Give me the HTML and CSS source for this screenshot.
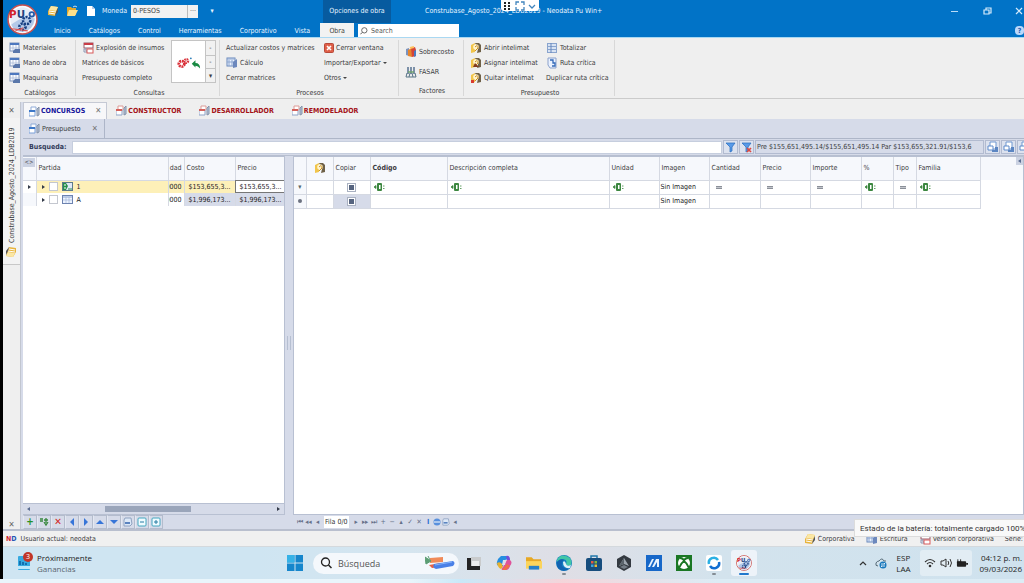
FILE: index.html
```html
<!DOCTYPE html>
<html lang="es">
<head>
<meta charset="utf-8">
<title>Construbase_Agosto_2024_LDB2019 - Neodata Pu Win+</title>
<link rel="stylesheet" href="styles.css">
</head>
<body>
<svg class="sprite" aria-hidden="true">
  <symbol id="logo" viewBox="0 0 30 30">
    <circle cx="15" cy="15" r="14" fill="#eef1f7" stroke="#c9504e" stroke-width="1.5"/>
    <circle cx="15" cy="15" r="12.3" fill="#e8edf6" stroke="#fff"/>
    <path d="M4 20Q9 16 18 12L27 14Q25 26 15 27 7 27 4 20Z" fill="#b4c9e8"/>
    <g fill="none" stroke="#173f82">
      <circle cx="19" cy="16" r="3.500" stroke-width="2.4" stroke-dasharray="2 1"/>
      <circle cx="15" cy="22" r="3" stroke-width="2.6" stroke-dasharray="2 1"/>
      <circle cx="24" cy="10" r="2.2" stroke="#285cab" stroke-width="1.8"/>
    </g>
    <path d="M5 24 20 26M8 26 16 23" stroke="#d55" stroke-width="1"/>
    <text x="2" y="14" font-family="DejaVu Sans" font-weight="700" font-size="10" fill="#d3232b">P<tspan fill="#23427f">U</tspan></text>
  </symbol>
  <symbol id="books" viewBox="0 0 12 12">
    <path d="M1 6 4 1 11 2 9 8 8 11 1 10Z" fill="#e8b43c"/><path d="M4 1 11 2 9 6 2 5Z" fill="#fbe7a4"/><path d="M2 6 9 7M2 8 8 9" stroke="#fff" stroke-width="1"/><path d="M9 7 11 3 11 7 8 11Z" fill="#555"/>
  </symbol>
  <symbol id="folder" viewBox="0 0 12 12"><path d="M1 2H5L6 3H10V10H1Z" fill="#e2a82c"/><path d="M3 5H12L9 11H1Z" fill="#ffe08a"/><path d="M7 2Q9 0 11 2" stroke="#cde" fill="none"/></symbol>
  <symbol id="page" viewBox="0 0 10 12"><path d="M1 1H6L9 4V11H1Z" fill="#fff"/><path d="M6 1V4H9" fill="#b8cbe6"/></symbol>
  <symbol id="sheet" viewBox="0 0 12 12"><rect x="1" y="1" width="9" height="8" fill="#f8fbff" stroke="#7d93bb"/><path d="M1 1H10V3H1Z" fill="#4d78be"/><path d="M1 6H10M4 3V9M7 3V9" stroke="#a5b6d3" stroke-width=".7"/><path d="M6 7H11V11H4V9Z" fill="#5a77aa"/></symbol>
  <symbol id="explode" viewBox="0 0 12 12"><rect x="2" y="1" width="9" height="5" fill="#fff" stroke="#9a5b68"/><path d="M2 1H11V3H2Z" fill="#c93d48"/><path d="M4 6V9H10M4 7H2V10H7" fill="none" stroke="#8b98b5"/><rect x="5" y="7" width="6" height="4" fill="#fff" stroke="#d85a5a"/></symbol>
  <symbol id="calc" viewBox="0 0 12 12"><rect x="1" y="1" width="8" height="8" fill="#e9f1ff" stroke="#6888bb"/><path d="M1 2H9M3 3V9M6 3V9M1 5H9" stroke="#8ba5cf"/><path d="M7 5 11 2V10L7 11Z" fill="#6c88bd"/></symbol>
  <symbol id="closered" viewBox="0 0 10 10"><rect x=".5" y=".5" width="9" height="9" rx="1" fill="#df5f48" stroke="#b8493a"/><path d="M3 3 7 7M7 3 3 7" stroke="#fff" stroke-width="1.600"/></symbol>
  <symbol id="extra" viewBox="0 0 12 12"><path d="M1 3 4 2V10L1 9Z" fill="#7c93be"/><path d="M3 4 7 2 7 11 3 10Z" fill="#e6852c"/><path d="M6 2 10 1 11 4V10L7 11Z" fill="#d54438"/><path d="M5 2 9 1" stroke="#ffc05c" stroke-width="2"/><path d="M9 5 11 4V10L9 11Z" fill="#4b79be"/></symbol>
  <symbol id="fasar" viewBox="0 0 12 12"><path d="M3 1V8M6 1V8M9 1V8" stroke="#7c90a8" stroke-width="2"/><path d="M1 11H11M2 7 1 11M10 7 11 11M5 7 4 11M7 7 8 11" stroke="#587486"/><path d="M3 6H9" stroke="#70a36f" stroke-width="1.500"/></symbol>
  <symbol id="intel" viewBox="0 0 12 12"><path d="M1 3 5 1 5 10 1 11Z" fill="#f1c54b"/><path d="M5 1H9L11 3V10L7 11 8 7Z" fill="#6f6148"/><circle cx="6" cy="5" r="2.800" fill="#fff3cd"/><path d="M5 5Q8 2 8 6L5 9" stroke="#c89025" fill="none"/></symbol>
  <symbol id="intelred" viewBox="0 0 12 12"><use href="#intel"/><path d="M1 8H4V11H1Z" fill="#d83c30"/></symbol>
  <symbol id="inteldark" viewBox="0 0 12 12"><use href="#intel"/><path d="M3 10 5 6 9 10Z" fill="#823b20"/></symbol>
  <symbol id="total" viewBox="0 0 12 12"><rect x="1" y="1" width="10" height="10" fill="#89a4ce"/><path d="M2 3H10M2 6H10M2 9H10" stroke="#f2f8ff" stroke-width="1.500"/><path d="M5 1V11" stroke="#6787bd"/></symbol>
  <symbol id="route" viewBox="0 0 12 12"><path d="M2 1H10V11H4L2 8Z" fill="#e9f1ff" stroke="#8ba1cb"/><path d="M4 3H7V6H9V9H6" fill="none" stroke="#3369b8" stroke-width="1.300"/></symbol>
  <symbol id="cogs" viewBox="0 0 26 18"><circle cx="5" cy="11" r="3" fill="none" stroke="#da3039" stroke-width="3" stroke-dasharray="2 .8"/><circle cx="10" cy="8" r="2" fill="none" stroke="#d9353d" stroke-width="2.500" stroke-dasharray="1.500 .7"/><circle cx="15" cy="5" r="1" fill="#2d7eb7"/><path d="M16 11 20 7V10Q25 10 25 16 23 13 20 13V15Z" fill="#198a43"/></symbol>
  <symbol id="docblue" viewBox="0 0 11 11"><path d="M2 1H7V5H2Z" fill="#fff" stroke="#8fabd8"/><path d="M0 5H6V10H0Z" fill="#fff" stroke="#7ba0d8"/><path d="M0 5H6" stroke="#3d78c8" stroke-width="2"/><path d="M8 3 10 1V9L8 10Z" fill="#b4c3da" stroke="#8593a8"/></symbol>
  <symbol id="docred" viewBox="0 0 11 11"><path d="M2 1H7V5H2Z" fill="#fff" stroke="#dd9b96"/><path d="M0 5H6V10H0Z" fill="#fff" stroke="#8fa4c8"/><path d="M0 5H6" stroke="#d4605a" stroke-width="2"/><path d="M8 3 10 1V9L8 10Z" fill="#b4c3da" stroke="#8593a8"/></symbol>
  <symbol id="rowsheet" viewBox="0 0 11 9"><rect x=".5" y=".5" width="10" height="8" fill="#edf4ff" stroke="#6d83b0"/><path d="M1 2H10" stroke="#8ba2cc"/><path d="M1 5H10M4 2V8M7 2V8" stroke="#a4b6d8" stroke-width=".7"/></symbol>
  <symbol id="rowgreen" viewBox="0 0 11 9"><rect x=".5" y=".5" width="10" height="8" fill="#dfe9f8" stroke="#5c7a8c"/><path d="M1 1H4L6 4 4 8H1Z" fill="#27904b"/><path d="M6 7H10" stroke="#27904b"/><path d="M2 3H4M2 6H4" stroke="#fff"/></symbol>
  <symbol id="funnel" viewBox="0 0 11 11"><path d="M1 1H10L7 5V9L5 10V5Z" fill="#5a9be8" stroke="#276abc" stroke-width=".7"/></symbol>
  <symbol id="funnelx" viewBox="0 0 11 11"><use href="#funnel"/><path d="M6 6 10 10M10 6 6 10" stroke="#de4a41" stroke-width="1.700"/></symbol>
  <symbol id="abc" viewBox="0 0 11 8"><rect x="3" y="0" width="5" height="8" rx="1" fill="#3c8740"/><rect x="5" y="2" width="1.500" height="4" fill="#fff"/><path d="M0 4 2 2.500V5.500ZM9 3H10.500M9 5.500H10.500" fill="#3c8740" stroke="#3c8740" stroke-width=".8"/></symbol>
  <symbol id="copydoc" viewBox="0 0 12 12"><path d="M3 1H9V8H3Z" fill="#fff" stroke="#6f97d0"/><path d="M1 5H6V9H1Z" fill="#fff" stroke="#5f8bcb"/><path d="M8 6H11V11H5V9H8Z" fill="#5c86c2"/></symbol>
  <symbol id="disk" viewBox="0 0 10 10"><path d="M2 1H8L9 7 7 9H1V3Z" fill="#dce8f7" stroke="#8fa2c0"/><path d="M2 5H7V7H2Z" fill="#5b83bf"/></symbol>
  <symbol id="win" viewBox="0 0 16 16"><path d="M0 0H7.500V7.500H0ZM8.500 0H16V7.500H8.500ZM0 8.500H7.500V16H0ZM8.500 8.500H16V16H8.500Z" fill="#1686cc"/><path d="M0 0H7.500V7.500H0Z" fill="#36b2e7"/></symbol>
  <symbol id="search" viewBox="0 0 12 12"><circle cx="5.500" cy="5" r="4" fill="none" stroke="currentColor" stroke-width="1.300"/><path d="M8.500 8 11.500 11" stroke="currentColor" stroke-width="1.500"/></symbol>
  <symbol id="pens" viewBox="0 0 30 14"><path d="M5 2 18 1V6L5 7Z" fill="#f08a58"/><path d="M0 1 6 5 1 8ZM3 0 5 4" fill="#5c9e74" stroke="#5c9e74"/><path d="M4 9 16 7V11L7 12Z" fill="#e46247"/><path d="M9 8 28 5Q31 7 28 10L11 13Q7 12 9 8Z" fill="#4a80e7"/><path d="M10 9 27 6" stroke="#83b3fb"/></symbol>
  <symbol id="taskview" viewBox="0 0 14 14"><rect x="4" y="1" width="10" height="9" fill="#c9cbcc"/><rect x="5" y="5" width="7" height="5" fill="#eceded"/><path d="M0 2H4V10H13V14H0Z" fill="#242424"/></symbol>
  <symbol id="copilot" viewBox="0 0 16 16"><path d="M5 1H10Q12 1 12 4L9 5 7 11H3Q0 10 1 7Q2 3 5 1Z" fill="#258ee0"/><path d="M1 8Q4 6 6 9L7 12 5 14Q2 13 1 8Z" fill="#e9b22f"/><path d="M11 5H14Q17 7 14 11 13 15 10 15H6Q5 14 7 12Z" fill="#df529a"/><path d="M10 1Q14 0 14 5H11Z" fill="#754dd9"/><path d="M6 15 11 9 14 11 10 15Z" fill="#f17045"/><path d="M7 5H10L9 10H6Z" fill="#dfe1ea"/></symbol>
  <symbol id="explorer" viewBox="0 0 17 14"><path d="M0 1H6L8 3H16V12H0Z" fill="#e7a824"/><path d="M0 5H17V13H0Z" fill="#fbd45b"/><path d="M3 10H14V14H3Z" fill="#2580c8"/></symbol>
  <symbol id="edge" viewBox="0 0 16 16"><circle cx="8" cy="8" r="8" fill="#147ec2"/><path d="M1 5Q4-1 10 1 17 3 15 10 11 12 10 9 12 5 7 4 3 4 1 7Z" fill="#42c6a6"/><path d="M1 7Q4 3 8 5 5 7 6 11 9 15 14 13 8 18 3 14 0 11 1 7Z" fill="#1263b1"/><path d="M7 7Q9 5 10 9 11 12 15 10L14 13Q7 14 7 7Z" fill="#e0f1f8"/></symbol>
  <symbol id="store" viewBox="0 0 16 16"><path d="M5 4V1H11V4" fill="none" stroke="#2279ac" stroke-width="1.500"/><rect y="3" width="16" height="13" rx="2" fill="#174d7d"/><path d="M5 6H7.500V8.500H5Z" fill="#e35b40"/><path d="M8.500 6H11V8.500H8.500Z" fill="#83b63d"/><path d="M5 9.500H7.500V12H5Z" fill="#3da5dc"/><path d="M8.500 9.500H11V12H8.500Z" fill="#efb936"/></symbol>
  <symbol id="armoury" viewBox="0 0 16 16"><path d="M8 0 15 4V12L8 16 1 12V4Z" fill="#343a41"/><path d="M8 3 13 11 8 9 3 11Z" fill="#9da6ae"/><path d="M8 3V9L3 11Z" fill="#5b646c"/><path d="M4 12 8 10 12 12 8 14Z" fill="#737d86"/></symbol>
  <symbol id="myasus" viewBox="0 0 16 16"><rect width="16" height="16" fill="#1768c9"/><path d="M2 12 6 4H8L4 12ZM6 12 10 4H13V12H11V7L8 12Z" fill="#e8f4ff"/></symbol>
  <symbol id="xbox" viewBox="0 0 16 16"><rect width="16" height="16" fill="#1a7724"/><circle cx="8" cy="8" r="6" fill="#fff"/><path d="M3 13Q5 8 8 6 11 8 13 13M4 3Q6 3 8 5 10 3 12 3" fill="none" stroke="#1a7724" stroke-width="2"/></symbol>
  <symbol id="ring" viewBox="0 0 16 16"><rect width="16" height="16" rx="2" fill="#fff"/><path d="M13 7A5 5 0 0 1 4 11" fill="none" stroke="#126fd2" stroke-width="2.500"/><path d="M3 9A5 5 0 0 1 12 5" fill="none" stroke="#2bb0e3" stroke-width="2.500"/></symbol>
  <symbol id="cloud" viewBox="0 0 12 12"><path d="M3 9Q0 9 1 6 2 4 4 4 7 0 9 4H11" fill="none" stroke="#566b77"/><circle cx="8" cy="8" r="3.500" fill="#1979bd"/><path d="M6 7H10L9 6M10 9H6L7 10" fill="none" stroke="#fff" stroke-width=".8"/></symbol>
  <symbol id="wifi" viewBox="0 0 12 10"><path d="M1 4Q6-1 11 4M3 6Q6 3 9 6" fill="none" stroke="#333" stroke-width="1.100"/><circle cx="6" cy="8" r="1.300" fill="#333"/></symbol>
  <symbol id="volume" viewBox="0 0 12 10"><path d="M1 3H3L6 1V9L3 7H1ZM8 3Q9.500 5 8 7M10 1Q13 5 10 9" fill="none" stroke="#333"/></symbol>
  <symbol id="battery" viewBox="0 0 13 10"><rect x="1" y="3" width="10" height="6" rx="1" fill="#222"/><path d="M11 5H13V7H11Z" fill="#222"/><path d="M2 1V4M5 1V4M1 4H6" stroke="#222"/></symbol>
  <symbol id="people" viewBox="0 0 12 14"><rect x="0" y="0" width="12" height="14" rx="1" fill="#36a9e0"/><path d="M0 10H12V13H0Z" fill="#bde9fb"/><path d="M2 9V5M5 9V6M8 9V7" stroke="#075d9e" stroke-width="1.500"/></symbol>
</svg>

<div class="desk">
<div class="bezel"></div>
<div class="app">
  <header class="top">
    <svg class="logo"><use href="#logo"/></svg>
    <div class="titlerow">
      <button class="qa" aria-label="Catálogos"><svg class="i12"><use href="#books"/></svg></button>
      <button class="qa" aria-label="Abrir"><svg class="i12"><use href="#folder"/></svg></button>
      <button class="qa" aria-label="Nuevo"><svg class="i12"><use href="#page"/></svg></button>
      <label class="moneda">Moneda <input class="currency" value="0-PESOS"></label>
      <button class="dots" aria-label="Elegir moneda">···</button>
      <button class="more" aria-label="Personalizar">▾</button>
      <span class="context">Opciones de obra</span>
      <span class="title">Construbase_Agosto_2024_LDB2019 - Neodata Pu Win+</span>
      <div class="winbtns">
        <button aria-label="Minimizar"><svg class="i10" viewBox="0 0 10 10"><path d="M1 5.500H8" stroke="#b9dcf8" stroke-width="1"/></svg></button>
        <button aria-label="Restaurar"><svg class="i10" viewBox="0 0 10 10"><path d="M2 4H7V8H2ZM4 4V2H9V7H7" fill="none" stroke="#d7ebfb" stroke-width="1.200"/></svg></button>
        <button aria-label="Cerrar"><svg class="i10" viewBox="0 0 10 10"><path d="M2 2 8 8M8 2 2 8" stroke="#d7ebfb" stroke-width="1.200"/></svg></button>
      </div>
    </div>
    <nav class="tabs">
      <a href="#">Inicio</a><a href="#">Catálogos</a><a href="#">Control</a><a href="#">Herramientas</a><a href="#">Corporativo</a><a href="#">Vista</a><a href="#" class="active">Obra</a>
      <label class="find"><svg class="i8"><use href="#search"/></svg><input placeholder="Search" aria-label="Search"></label>
      <button class="help" aria-label="Ayuda">?</button>
    </nav>
  </header>

  <section class="ribbon">
    <div class="group g1"><div class="cmds">
      <div class="stack"><button><svg class="i12"><use href="#sheet"/></svg>Materiales</button><button><svg class="i12"><use href="#sheet"/></svg>Mano de obra</button><button><svg class="i12"><use href="#sheet"/></svg>Maquinaria</button></div>
    </div><span>Catálogos</span></div>
    <div class="group g2"><div class="cmds">
      <div class="stack"><button><svg class="i12"><use href="#explode"/></svg>Explosión de insumos</button><button>Matrices de básicos</button><button>Presupuesto completo</button></div>
      <div class="gallery"><button class="galitem" aria-label="Matrices"><svg class="cogs"><use href="#cogs"/></svg></button><div class="galnav"><button aria-label="Arriba">-</button><button aria-label="Abajo">-</button><button aria-label="Más">▾</button></div></div>
    </div><span>Consultas</span></div>
    <div class="group g3"><div class="cmds">
      <div class="stack wide"><button>Actualizar costos y matrices</button><button><svg class="i12"><use href="#calc"/></svg>Cálculo</button><button>Cerrar matrices</button></div>
      <div class="stack"><button><svg class="i10"><use href="#closered"/></svg>Cerrar ventana</button><button>Importar/Exportar <i class="caret"></i></button><button>Otros <i class="caret"></i></button></div>
    </div><span>Procesos</span></div>
    <div class="group g4"><div class="cmds">
      <div class="stack two"><button><svg class="i12"><use href="#extra"/></svg>Sobrecosto</button><button><svg class="i12"><use href="#fasar"/></svg>FASAR</button></div>
    </div><span>Factores</span></div>
    <div class="group g5"><div class="cmds">
      <div class="stack mid"><button><svg class="i12"><use href="#intel"/></svg>Abrir intelimat</button><button><svg class="i12"><use href="#inteldark"/></svg>Asignar intelimat</button><button><svg class="i12"><use href="#intelred"/></svg>Quitar intelimat</button></div>
      <div class="stack"><button><svg class="i12"><use href="#total"/></svg>Totalizar</button><button><svg class="i12"><use href="#route"/></svg>Ruta crítica</button><button>Duplicar ruta crítica</button></div>
    </div><span>Presupuesto</span></div>
  </section>

  <div class="body">
    <aside class="dock">
      <button class="x" aria-label="Cerrar panel">✕</button>
      <a href="#" class="vtab">Construbase_Agosto_2024_LDB2019<svg class="i12"><use href="#books"/></svg></a>
      <button class="x low" aria-label="Cerrar">✕</button>
    </aside>
    <main class="work">
      <div class="doctabs">
        <a href="#" class="on"><svg class="i11"><use href="#docblue"/></svg>CONCURSOS<span>✕</span></a>
        <a href="#"><svg class="i11"><use href="#docred"/></svg>CONSTRUCTOR</a>
        <a href="#"><svg class="i11"><use href="#docred"/></svg>DESARROLLADOR</a>
        <a href="#"><svg class="i11"><use href="#docred"/></svg>REMODELADOR</a>
      </div>
      <div class="subtabs"><a href="#"><svg class="i11"><use href="#docblue"/></svg>Presupuesto<span>✕</span></a></div>
      <div class="searchbar">
        <label for="q">Busqueda:</label><input id="q">
        <button aria-label="Filtrar"><svg class="i11"><use href="#funnel"/></svg></button>
        <button aria-label="Quitar filtro"><svg class="i11"><use href="#funnelx"/></svg></button>
        <output>Pre $155,651,495.14/$155,651,495.14 Par $153,655,321.91/$153,6</output>
        <button aria-label="Copiar"><svg class="i12"><use href="#copydoc"/></svg></button>
        <button aria-label="Pegar"><svg class="i12"><use href="#copydoc"/></svg></button>
        <button aria-label="Mover"><svg class="i12"><use href="#copydoc"/></svg></button>
      </div>
      <div class="panels">
        <section class="left">
          <div class="treewrap">
            <table class="tree">
              <colgroup><col class="t0"><col class="t1"><col class="t2"><col class="t3"><col class="t4"></colgroup>
              <thead><tr><th class="corner"><button>&lt;&gt;</button></th><th>Partida</th><th class="clip"><div>dad</div></th><th>Costo</th><th>Precio</th></tr></thead>
              <tbody>
                <tr class="sel"><td class="ind"><i class="tri"></i></td><td><div class="node"><i class="tri"></i><input type="checkbox" aria-label="Partida 1"><svg class="sheet"><use href="#rowgreen"/></svg>1</div></td><td class="clip"><div>0000</div></td><td class="num">$153,655,3...</td><td class="num focus">$153,655,3...</td></tr>
                <tr><td class="ind"></td><td><div class="node"><i class="tri"></i><input type="checkbox" aria-label="Partida A"><svg class="sheet"><use href="#rowsheet"/></svg>A</div></td><td class="clip"><div>0000</div></td><td class="num shade">$1,996,173...</td><td class="num shade">$1,996,173...</td></tr>
              </tbody>
            </table>
          </div>
          <div class="hscroll"><i class="tri back"></i><div class="track"><div class="thumb"></div></div><i class="tri"></i></div>
          <div class="tools">
            <button class="green" aria-label="Agregar">+</button>
            <button aria-label="Agregar hijo"><svg class="i10" viewBox="0 0 10 10"><path d="M1 2H4M1 4H4M7 1V6M5 5 7 8 9 5M5 3H9" stroke="#39883f" stroke-width="1.300" fill="none"/></svg></button>
            <button class="red" aria-label="Eliminar">✕</button>
            <button aria-label="Izquierda"><svg class="i8" viewBox="0 0 8 8"><path d="M2 4 6 0V8Z" fill="#3675d8"/></svg></button>
            <button aria-label="Derecha"><svg class="i8" viewBox="0 0 8 8"><path d="M6 4 2 0V8Z" fill="#3675d8"/></svg></button>
            <button aria-label="Subir"><svg class="i8" viewBox="0 0 8 8"><path d="M0 6 4 2 8 6Z" fill="#3675d8"/></svg></button>
            <button aria-label="Bajar"><svg class="i8" viewBox="0 0 8 8"><path d="M0 2H8L4 6Z" fill="#3675d8"/></svg></button>
            <button aria-label="Guardar"><svg class="i10"><use href="#disk"/></svg></button>
            <button aria-label="Contraer"><svg class="i10" viewBox="0 0 10 10"><rect x="1" y="1" width="8" height="8" rx="1" fill="#effbff" stroke="#45a6bf"/><path d="M3 5H7" stroke="#277ca2"/></svg></button>
            <button aria-label="Expandir"><svg class="i10" viewBox="0 0 10 10"><rect x="1" y="1" width="8" height="8" rx="1" fill="#effbff" stroke="#45a6bf"/><path d="M3 5H7M5 3V7" stroke="#277ca2"/></svg></button>
          </div>
        </section>
        <div class="split"><i></i></div>
        <section class="right">
          <div class="gridwrap">
            <table class="grid">
              <colgroup><col class="c0"><col class="c1"><col class="c2"><col class="c3"><col class="c4"><col class="c5"><col class="c6"><col class="c7"><col class="c8"><col class="c9"><col class="c10"><col class="c11"><col class="c12"><col></colgroup>
              <thead><tr><th></th><th class="mid"><svg class="i12"><use href="#intel"/></svg></th><th>Copiar</th><th><b>Código</b></th><th>Descripción completa</th><th>Unidad</th><th>Imagen</th><th>Cantidad</th><th>Precio</th><th>Importe</th><th>%</th><th>Tipo</th><th>Familia</th><th class="rest"></th></tr></thead>
              <tbody>
                <tr><td class="mark">▾</td><td></td><td class="mid"><i class="box"></i></td><td><svg class="abc"><use href="#abc"/></svg></td><td><svg class="abc"><use href="#abc"/></svg></td><td><svg class="abc"><use href="#abc"/></svg></td><td class="img">Sin Imagen</td><td><i class="eq"></i></td><td><i class="eq"></i></td><td><i class="eq"></i></td><td><svg class="abc"><use href="#abc"/></svg></td><td><i class="eq"></i></td><td><svg class="abc"><use href="#abc"/></svg></td><td class="rest"></td></tr>
                <tr><td class="mark"><i class="dot"></i></td><td></td><td class="mid shade"><i class="box"></i></td><td></td><td></td><td></td><td class="img">Sin Imagen</td><td></td><td></td><td></td><td></td><td></td><td></td><td class="rest"></td></tr>
              </tbody>
            </table>
            <button class="pin" aria-label="Mostrar panel"><i class="tri back"></i></button>
          </div>
          <div class="pager">
            <button aria-label="Primero">⏮</button><button aria-label="Página anterior">◂◂</button><button aria-label="Anterior">◂</button>
            <span>Fila 0/0</span>
            <button aria-label="Siguiente">▸</button><button aria-label="Página siguiente">▸▸</button><button aria-label="Último">⏭</button><button>+</button><button>−</button><button>▴</button><button>✓</button><button>✕</button>
            <button class="blue">I</button><button aria-label="Ver"><svg class="i8" viewBox="0 0 8 8"><circle cx="4" cy="4" r="3.500" fill="#5990dd"/><path d="M1 4H7" stroke="#fff"/></svg></button><button aria-label="Imprimir"><svg class="i8"><use href="#disk"/></svg></button><button>◂</button>
          </div>
        </section>
      </div>
    </main>
  </div>
  <footer class="status"><b>N<em>D</em></b><span>Usuario actual: neodata</span>
    <div class="info"><span><svg class="i12"><use href="#books"/></svg>Corporativa</span><span><svg class="i12"><use href="#calc"/></svg>Escritura</span><span><svg class="i12"><use href="#explode"/></svg>Versión corporativa</span><span>Serie:</span></div>
  </footer>
  <footer class="taskbar">
    <button class="widget"><span class="wicon"><svg class="people"><use href="#people"/></svg><i>3</i></span><span class="wtext">Próximamente<small>Ganancias</small></span></button>
    <div class="apps">
      <button aria-label="Inicio"><svg class="i16"><use href="#win"/></svg></button>
      <label class="tsearch"><svg class="i12"><use href="#search"/></svg><input placeholder="Búsqueda" aria-label="Búsqueda"><svg class="pens"><use href="#pens"/></svg></label>
      <button aria-label="Vista de tareas"><svg class="i14"><use href="#taskview"/></svg></button>
      <button aria-label="Copilot"><svg class="i16"><use href="#copilot"/></svg></button>
      <button aria-label="Explorador"><svg class="i16"><use href="#explorer"/></svg></button>
      <button aria-label="Edge" class="run"><svg class="i16"><use href="#edge"/></svg></button>
      <button aria-label="Tienda"><svg class="i16"><use href="#store"/></svg></button>
      <button aria-label="Armoury"><svg class="i16"><use href="#armoury"/></svg></button>
      <button aria-label="MyASUS"><svg class="i16"><use href="#myasus"/></svg></button>
      <button aria-label="Xbox"><svg class="i16"><use href="#xbox"/></svg></button>
      <button aria-label="Asistencia" class="run"><svg class="i16"><use href="#ring"/></svg></button>
      <button aria-label="Neodata" class="run current"><svg class="i16"><use href="#logo"/></svg></button>
    </div>
    <div class="tray">
      <button aria-label="Iconos ocultos"><svg class="i8" viewBox="0 0 8 8"><path d="M1 6 4 3 7 6" fill="none" stroke="#333" stroke-width="1.200"/></svg></button>
      <button aria-label="OneDrive"><svg class="i12"><use href="#cloud"/></svg></button>
      <button class="lang">ESP<br>LAA</button>
      <button class="sys" aria-label="Red, volumen y batería"><svg class="i12"><use href="#wifi"/></svg><svg class="i12"><use href="#volume"/></svg><svg class="i12"><use href="#battery"/></svg></button>
      <button class="clock">04:12 p. m.<br>09/03/2026</button>
    </div>
  </footer>
</div>
</div>
<div class="edge"></div>
<div class="capture"><svg class="i10" viewBox="0 0 10 10"><path d="M3 1V10M7 1V10" stroke="#222" stroke-width="2" stroke-dasharray="2 1"/></svg><svg class="i10" viewBox="0 0 10 10"><path d="M1 4V1H4M6 1H9V4M9 6V9H6M4 9H1V6" fill="none" stroke="#4285bd" stroke-width="1.300"/></svg><svg class="i8" viewBox="0 0 8 8"><path d="M1 3 4 6 7 3" fill="none" stroke="#4285bd" stroke-width="1.300"/></svg></div>
<div class="tip" role="tooltip">Estado de la batería: totalmente cargado 100%</div>
</body>
</html>
```

FILE: styles.css
```css
* { box-sizing: border-box; }
body { margin: 0; min-height: 100vh; display: flex; flex-direction: column; overflow: hidden; position: relative; background: #efefef; color: #3b3b40; font-family: "DejaVu Sans Condensed", "DejaVu Sans", sans-serif; font-size: 7px; line-height: 10px; white-space: nowrap; }
button, input { font: inherit; color: inherit; border: 0; padding: 0; margin: 0; background: none; min-width: 0; }
button { display: inline-flex; align-items: center; justify-content: center; }
a { color: inherit; text-decoration: none; }
svg { display: block; flex: none; }
.sprite { position: absolute; width: 0; height: 0; }
.i8 { width: 8px; height: 8px; }
.i10 { width: 10px; height: 10px; }
.i11 { width: 11px; height: 11px; }
.i12 { width: 12px; height: 12px; }
.i14 { width: 14px; height: 14px; }
.i16 { width: 16px; height: 16px; }
.tri { display: inline-block; border: 2px solid transparent; border-left: 3px solid #333a48; border-right: 0; }
.tri.back { border-left: 0; border-right: 3px solid #5b6d92; }

.desk { flex: 1; display: flex; }
.bezel { width: 3px; background: #000; }
.app { flex: 1; min-width: 0; display: flex; flex-direction: column; }
.edge { height: 4px; background: linear-gradient(90deg, #e9f5fb 0 40%, #c9e8f8 45%, #f4d5da 55%, #dcecf5 70%); }

/* Title bar and ribbon tabs */
.top { display: grid; grid-template-columns: 40px minmax(0, 1fr); grid-template-rows: 23px 14px; background: #0173c7; color: #e8f4ff; }
.logo { grid-row: 1 / 3; width: 31px; height: 31px; margin: 4px 0 0 4px; }
.titlerow { display: flex; align-items: center; padding-bottom: 1px; }
.qa { width: 19px; }
.moneda { display: flex; align-items: center; justify-content: space-between; width: 85px; margin-left: 2px; }
.currency { width: 56px; height: 13px; background: #f2f2f2; color: #444; padding-left: 2px; }
.dots { width: 11px; height: 13px; background: #f2f2f2; color: #555; border-left: 1px solid #bbb; }
.more { width: 28px; }
.context { width: 68px; margin-left: 97px; height: 23px; line-height: 22px; margin-bottom: -1px; text-align: center; background: #075b9f; }
.title { margin-left: 34px; flex: 1; }
.winbtns { display: flex; gap: 22px; }
.tabs { display: flex; }
.tabs a { padding: 0 9px; line-height: 16px; }
.tabs a:first-child { margin-left: 2px; }
.tabs .active { background: #f2f2f2; color: #444; width: 34px; text-align: center; margin-left: 1px; }
.find { width: 101px; margin-left: 4px; margin-top: 1px; height: 13px; display: flex; align-items: center; gap: 3px; padding-left: 2px; background: #fff; color: #555; }
.find svg { transform: scaleX(-1); }
.find input { width: 80px; }
input::placeholder { color: #555; opacity: 1; }
.help { margin-left: auto; width: 9px; height: 9px; margin-top: 3px; border-radius: 4px; background: #bcd8fa; color: #225aae; font-weight: 700; }

.ribbon { display: flex; padding-left: 3px; height: 62px; border-bottom: 1px solid #cbcbcb; border-top: 1px solid #a9d8f2; background: #efefef; }
.group { display: flex; flex-direction: column; border-right: 1px solid #d8d8d8; margin: 2px 0; padding: 0 4px; }
.group > span { text-align: center; padding-top: 3px; }
.cmds { display: flex; height: 46px; }
.g1 { width: 70px; padding-left: 3px; }
.g2 { width: 144px; padding-left: 6px; padding-right: 3px; }
.g3 { width: 179px; padding-left: 6px; }
.g4 { width: 65px; padding-left: 6px; }
.g5 { width: 151px; padding-left: 6px; }
.stack { display: flex; flex-direction: column; align-items: flex-start; }
.stack button { height: 15px; gap: 2px; }
.stack.wide { width: 98px; }
.stack.mid { width: 76px; }
.stack.two { padding-top: 4px; gap: 5px; }
.caret { border: 2px solid transparent; border-top: 2px solid #444; border-bottom: 0; }
.gallery { display: flex; margin-left: auto; width: 45px; height: 43px; border: 1px solid #c4c4c4; background: #fff; }
.galitem { flex: 1; }
.cogs { width: 24px; height: 18px; }
.galnav { width: 10px; display: grid; grid-template-rows: 1fr 1fr 1fr; border-left: 1px solid #c4c4c4; background: #f1f1f1; }
.galnav button + button { border-top: 1px solid #c4c4c4; }

/* Work area */
.body { flex: 1; display: flex; padding-top: 3px; background: #efefef; border-bottom: 2px solid #b9bfce; }
.dock { width: 18px; display: flex; flex-direction: column; align-items: center; padding-top: 1px; border-right: 1px solid #c2c6d0; }
.x { height: 15px; color: #666; font-size: 8px; }
.vtab { writing-mode: vertical-rl; transform: rotate(180deg); width: 17px; height: 147px; display: flex; flex-direction: row-reverse; align-items: center; justify-content: flex-end; gap: 3px; padding: 6px 0; background: #f3f3f3; border-top: 1px solid #c8c8c8; }
.low { margin-top: auto; height: 9px; }
.work { flex: 1; min-width: 0; overflow: hidden; display: flex; flex-direction: column; background: #d6dbe9; padding-left: 2px; }
.doctabs { display: flex; height: 17px; background: #efefef; font-weight: 700; color: #a31217; }
.doctabs a { display: flex; align-items: center; gap: 1px; padding: 0 9px; }
.doctabs a + a { margin-right: 1px; padding-right: 8px; }
.doctabs .on { background: #f7f7f9; color: #14149b; border: 1px solid #c5c9d4; border-bottom: 0; padding: 0 5px; }
.doctabs span, .subtabs span { margin-left: 9px; color: #777; font-weight: 400; font-size: 8px; }
.subtabs { display: flex; height: 20px; border-bottom: 1px solid #aeb6c8; }
.subtabs a { display: flex; align-items: center; gap: 2px; padding: 0 6px; background: #d6dbe9; border-right: 1px solid #adb5c8; }
.searchbar { display: flex; align-items: center; height: 17px; gap: 1px; margin-right: -8px; padding: 1px 0 1px 6px; border-bottom: 1px solid #b7bfd0; }
.searchbar label { font-weight: 700; width: 42px; color: #333c5a; }
.searchbar > input { flex: 1; height: 13px; background: #fff; border: 1px solid #c6cede; }
.searchbar button { flex: none; width: 15px; height: 14px; border: 1px solid #b2bbd0; background: #dce2ef; }
.searchbar output { width: 229px; flex: none; overflow: hidden; border: 1px solid #b2bbd0; line-height: 12px; padding-left: 1px; }
.panels { flex: 1; display: flex; }
.left { width: 262px; display: flex; flex-direction: column; }
.treewrap, .gridwrap { flex: 1; background: #fff; border: 1px solid #b8c0d2; position: relative; overflow: hidden; }
.treewrap { border-left-width: 0; }
table { border-collapse: collapse; table-layout: fixed; width: 100%; }
th, td { padding: 0 2px; font-weight: 400; text-align: left; overflow: hidden; border-right: 1px solid #d5d9e2; }
th { height: 23px; background: #f6f8fc; border-bottom: 1px solid #d5d9e2; }
td { height: 13px; }
.t0 { width: 13px; } .t1 { width: 132px; } .t2 { width: 16px; } .t3 { width: 51px; } .t4 { width: 50px; }
.corner { vertical-align: top; padding: 0; }
.corner button { width: 12px; height: 9px; background: #cbd2e2; font-size: 6px; }
.clip { padding: 0 2px 0 0; }
.clip div { display: flex; justify-content: flex-end; overflow: hidden; }
.ind { padding: 0; text-align: center; background: #f6f8fc; line-height: 4px; }
.sel td { background: #fdf0b8; color: #222; }
.sel .ind, .sel .focus { background: #fff; }
.sel .focus { outline: 1px solid #777; outline-offset: -1px; }
.node { display: flex; align-items: center; gap: 4px; padding-left: 3px; }
.node input { appearance: none; width: 9px; height: 9px; border: 1px solid #c4c7cf; background: #fff; }
.sheet { width: 11px; height: 9px; }
.tree tbody { color: #222; }
.num { padding-left: 4px; }
.shade { background: #d6dbe9; }
.hscroll { display: flex; align-items: center; height: 11px; padding: 0 4px; border-right: 1px solid #b8c0d2; border-bottom: 1px solid #b8c0d2; }
.track { flex: 1; padding: 0 86px 0 75px; }
.thumb { height: 6px; background: #9aa5ba; }
.tools { display: flex; height: 14px; }
.tools button { width: 14px; height: 14px; border: 1px solid #b4bccd; border-left-color: #e4e8f2; }
.green { color: #259128; font-size: 10px; font-weight: 700; }
.red { color: #d22a25; font-size: 10px; font-weight: 700; }
.split { width: 8px; display: flex; align-items: center; justify-content: center; }
.split i { height: 14px; width: 4px; border: solid #b6bfd1; border-width: 0 1px; }
.right { flex: 1; min-width: 0; display: flex; flex-direction: column; }
.grid th { padding: 0 2px; }
.grid td { height: 14px; padding: 0 3px; border-bottom: 1px solid #d5d9e2; }
.grid .rest { border-right: 0; border-bottom: 0; }
.c0 { width: 12px; } .c1 { width: 27px; } .c2 { width: 37px; } .c3 { width: 77px; } .c4 { width: 162px; } .c5 { width: 50px; } .c6 { width: 50px; } .c7 { width: 51px; } .c8 { width: 50px; } .c9 { width: 51px; } .c10 { width: 32px; } .c11 { width: 23px; } .c12 { width: 64px; }
.grid .mid { text-align: center; }
.grid .mid svg { margin: 0 auto; }
.grid .mark { padding: 0; text-align: center; background: #f6f8fc; color: #566; }
.dot { display: block; width: 4px; height: 4px; margin: 0 auto; border-radius: 2px; background: #6c7280; }
.grid .img { padding: 0 1px; color: #222; }
.box { display: block; margin: 0 auto; width: 9px; height: 9px; border: 1px solid #a9b1c1; background: #56647f; box-shadow: inset 0 0 0 1px #fff; }
.abc { width: 11px; height: 8px; }
.eq { display: block; width: 6px; height: 3px; margin-left: 3px; border: solid #8b9099; border-width: 1px 0; background: #c3c6cc; }
.pin { position: absolute; right: 0; top: 0; width: 7px; height: 8px; background: #cbd2e2; }
.pager { display: flex; height: 14px; align-items: center; color: #66718a; padding-left: 2px; }
.pager button { width: 9px; }
.pager span { background: #fff; color: #333; line-height: 12px; padding: 0 1px; margin: 0 3px 0 2px; }
.pager .blue { color: #2e6fd2; font-weight: 700; }

.status { display: flex; align-items: center; height: 16px; padding-left: 3px; gap: 4px; border-bottom: 1px solid #d4d9dd; background: #f0f0f0; }
.status b { color: #cf2431; }
.status em { font-style: normal; color: #2557b4; }
.info { display: flex; margin-left: auto; gap: 11px; padding-right: 1px; }
.info span { display: flex; align-items: center; gap: 2px; }

/* Windows taskbar */
.taskbar { display: flex; align-items: center; height: 32px; padding-right: 2px; background: linear-gradient(90deg, #cfe5f2 0 25%, #d5e5ef 40%, #dfdee5 55%, #d3e3ed 70%, #cfe2ee); font-family: "Open Sans", "Noto Sans", sans-serif; font-size: 8px; line-height: 11px; color: #222; }
.widget { width: 279px; justify-content: flex-start; padding-left: 15px; gap: 7px; text-align: left; }
.wicon { position: relative; }
.people { width: 12px; height: 14px; }
.wicon i { position: absolute; left: 5px; top: -4px; width: 10px; height: 10px; border-radius: 5px; background: #c13527; color: #fff; font-style: normal; font-size: 7px; line-height: 10px; text-align: center; }
.wtext small { display: block; font-size: 8px; color: #5b6670; }
.apps { display: flex; align-items: center; }
.apps button { width: 26px; height: 26px; margin-right: 4px; border-radius: 3px; flex-direction: column; }
.apps button:first-child { margin-right: 5px; }
.apps .run::after { content: ""; width: 4px; height: 2px; margin-top: 2px; margin-bottom: -4px; border-radius: 1px; background: #858d94; }
.apps .current { background: #edf3f9; }
.apps .current::after { width: 10px; background: #2178cc; }
.tsearch { display: flex; align-items: center; gap: 6px; width: 146px; height: 21px; padding: 0 4px 0 7px; margin-right: 2px; border-radius: 11px; background: #f4f8fc; font-size: 9px; }
.tsearch input { flex: 1; }
.pens { width: 30px; height: 14px; }
.tray { display: flex; align-items: center; gap: 8px; margin-left: auto; }
.sys { gap: 4px; height: 26px; width: 52px; border-radius: 3px; background: #e2edf4; }
.lang { text-align: center; margin: 0 1px; }
.clock { text-align: right; }

.capture { position: absolute; left: 501px; top: 0; display: flex; align-items: center; gap: 3px; height: 11px; padding: 0 3px 0 1px; border-radius: 0 0 3px 3px; background: #fff; }
.tip { position: absolute; right: 0; bottom: 46px; width: 170px; height: 18px; line-height: 18px; padding-left: 5px; overflow: hidden; background: #f9f9f9; border: 1px solid #dcdcdc; border-right: 0; color: #333; font-family: Roboto, "Noto Sans", sans-serif; font-size: 8px; }
```
